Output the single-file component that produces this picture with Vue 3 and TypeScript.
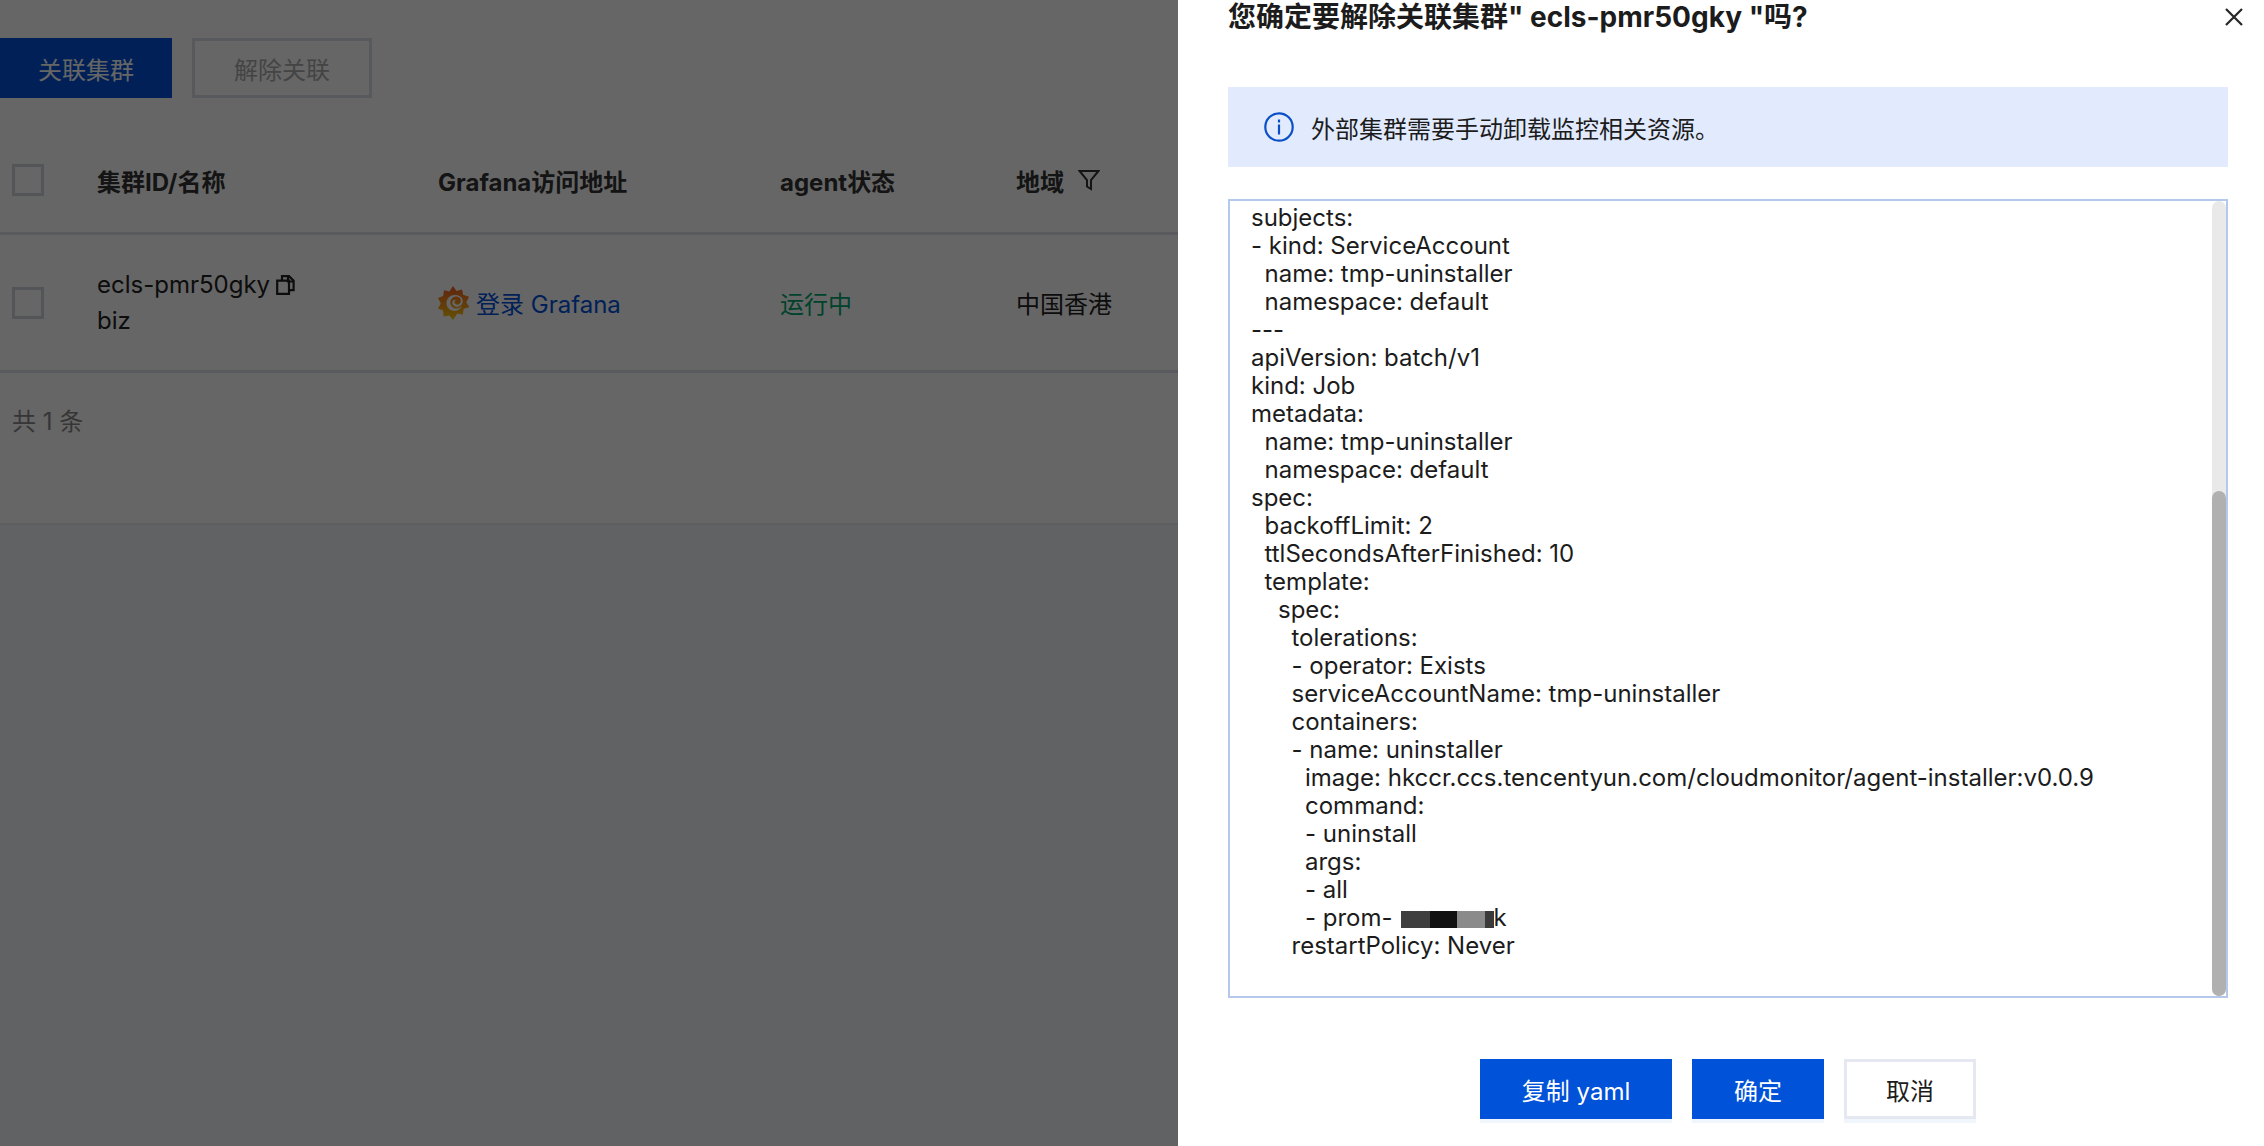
<script setup lang="ts">
interface YamlLine { text: string; redacted?: boolean; tail?: string }

const yamlLines: YamlLine[] = [
  { text: 'subjects:' },
  { text: '- kind: ServiceAccount' },
  { text: '  name: tmp-uninstaller' },
  { text: '  namespace: default' },
  { text: '---' },
  { text: 'apiVersion: batch/v1' },
  { text: 'kind: Job' },
  { text: 'metadata:' },
  { text: '  name: tmp-uninstaller' },
  { text: '  namespace: default' },
  { text: 'spec:' },
  { text: '  backoffLimit: 2' },
  { text: '  ttlSecondsAfterFinished: 10' },
  { text: '  template:' },
  { text: '    spec:' },
  { text: '      tolerations:' },
  { text: '      - operator: Exists' },
  { text: '      serviceAccountName: tmp-uninstaller' },
  { text: '      containers:' },
  { text: '      - name: uninstaller' },
  { text: '        image: hkccr.ccs.tencentyun.com/cloudmonitor/agent-installer:v0.0.9' },
  { text: '        command:' },
  { text: '        - uninstall' },
  { text: '        args:' },
  { text: '        - all' },
  { text: '        - prom-', redacted: true, tail: 'k' },
  { text: '      restartPolicy: Never' },
]
</script>

<template>
  <div class="root">
    <main class="page">
      <section class="panel">
        <div class="toolbar">
          <button class="btn primary wide">关联集群</button>
          <button class="btn disabled wide2">解除关联</button>
        </div>
        <div class="table">
          <div class="tr head">
            <div class="td"><span class="check"></span></div>
            <div class="td">集群ID/名称</div>
            <div class="td">Grafana访问地址</div>
            <div class="td">agent状态</div>
            <div class="td area">
              地域
              <svg class="funnel" viewBox="0 0 22 22" fill="none" stroke="currentColor" stroke-width="2">
                <path d="M1.5 2h19l-7.5 9v9l-4-2.5V11z" stroke-linejoin="miter" />
              </svg>
            </div>
          </div>
          <div class="tr body">
            <div class="td"><span class="check"></span></div>
            <div class="td stack">
              <div class="idline">
                ecls-pmr50gky
                <svg class="copy" viewBox="0 0 19 20" fill="none" stroke="currentColor" stroke-width="2.2">
                  <path d="M6 5V1.2h7l4.6 4.6v9.4H13" />
                  <path d="M1.2 5.6H13v13.2H1.2z" />
                  <path d="M12 1.5V6.5h5.5" />
                </svg>
              </div>
              <div>biz</div>
            </div>
            <div class="td link">
              <svg class="grafana" viewBox="0 0 32 34">
                <defs>
                  <linearGradient id="gf" x1="0" y1="0" x2="0" y2="1">
                    <stop offset="0" stop-color="#f05a28" />
                    <stop offset="1" stop-color="#fbca0a" />
                  </linearGradient>
                </defs>
                <path
                  fill="url(#gf)"
                  fill-rule="evenodd"
                  d="M15 0l3.5 5 5.6-1.6 1 5.4 6 2-2.8 5.4 3 5-5.6 1.5-.9 6-5.5-1.2L15 34l-3.6-4.6-5.8 1-.5-6L0 22.600l2.800-5.200L0 12l5.200-2 .8-5.800 5.400 1.400zM16.500 9a8 8 0 1 0 7.500 10.500c-1.500 2-3.500 3-5.500 3a6 6 0 0 1-.5-12c2.500 0 4.500 1.500 4.800 3.500.6 2.800-1.800 5-4 4.600-1.800-.3-2.600-1.800-2.300-3 .3-1 1.200-1.500 2.200-1.300-1.500-1.500-4.500-.3-4.500 2.300 0 2.500 2.300 4.500 5 4.300 3.500-.3 6-3.200 5.500-6.800C24 10.500 20.500 9 16.500 9z"
                />
              </svg>
              <span>登录 Grafana</span>
            </div>
            <div class="td running">运行中</div>
            <div class="td">中国香港</div>
          </div>
        </div>
        <div class="total">共 1 条</div>
      </section>
    </main>

    <div class="mask"></div>

    <aside class="drawer">
      <header class="drawer-head">
        <h2 class="title">您确定要解除关联集群" ecls-pmr50gky "吗?</h2>
        <svg class="close" viewBox="0 0 18 18" fill="none" stroke="currentColor" stroke-width="2.200">
          <path d="M1 1l16 16M17 1L1 17" />
        </svg>
      </header>
      <div class="alert">
        <svg class="info" viewBox="0 0 30 30" fill="none" stroke="currentColor" stroke-width="2.200">
          <circle cx="15" cy="15" r="13.700" />
          <path d="M15 12.500v10" />
          <path d="M15 7.500v3" />
        </svg>
        <span>外部集群需要手动卸载监控相关资源。</span>
      </div>
      <div class="yaml">
        <div class="yaml-text">
          <div v-for="(line, i) in yamlLines" :key="i" class="yaml-line">{{ line.text }}<template v-if="line.redacted"><span class="redact"></span>{{ line.tail }}</template></div>
        </div>
        <div class="scrollbar">
          <div class="thumb"></div>
        </div>
      </div>
      <footer class="actions">
        <button class="btn primary lift copy-btn">复制 yaml</button>
        <button class="btn primary lift act">确定</button>
        <button class="btn plain lift act">取消</button>
      </footer>
    </aside>
  </div>
</template>

<style>
html, body { margin: 0; padding: 0; background: #f3f4f7; }
</style>

<style scoped>
.root {
  position: relative;
  width: 2264px;
  height: 1146px;
  overflow: hidden;
  font-family: Inter, "Noto Sans CJK SC", sans-serif;
  font-size: 24px;
  color: #222;
}
.page { height: 100%; background: #f3f4f7; }
.panel {
  height: 525px;
  box-sizing: border-box;
  background: #fff;
  padding-top: 38px;
  border-bottom: 2px solid #e9ebef;
}
.toolbar { display: flex; gap: 20px; }
.btn {
  box-sizing: border-box;
  height: 60px;
  padding: 0;
  border: 0;
  border-radius: 0;
  font: inherit;
  display: flex;
  align-items: center;
  justify-content: center;
}
.primary { background: #0052d9; color: #fff; }
.wide { width: 172px; }
.wide2 { width: 180px; }
.disabled { background: #fff; color: #aaa; border: 3px solid #dcdfe6; }
.table { margin-top: 30px; }
.tr {
  display: grid;
  grid-template-columns: 97px 341px 342px 236px 1fr;
  align-items: center;
  border-bottom: 3px solid #dfe1e8;
  width: 1178px;
  box-sizing: border-box;
}
.head { height: 107px; font-weight: 700; color: #333; }
.body { height: 138px; }
.td { display: flex; align-items: center; }
.check {
  display: block;
  box-sizing: border-box;
  width: 32px;
  height: 32px;
  margin-left: 12px;
  border: 3px solid #d3d5dd;
  background: #fff;
}
.area { gap: 14px; }
.funnel { width: 22px; height: 22px; }
.stack { display: block; line-height: 36px; }
.idline { display: flex; align-items: center; gap: 6px; }
.copy { width: 19px; height: 20px; }
.link { gap: 6px; color: #0052d9; }
.grafana { width: 32px; height: 34px; flex: none; }
.running { color: #00a870; }
.total { margin: 31px 0 0 12px; line-height: 36px; color: #888; }
.mask {
  position: absolute;
  inset: 0;
  background: rgba(0, 0, 0, 0.6);
}
.drawer {
  position: absolute;
  top: 0;
  right: 0;
  bottom: 0;
  width: 1086px;
  box-sizing: border-box;
  background: #fff;
  padding: 0 36px 0 50px;
  color: #1c1c1c;
}
.drawer-head {
  height: 87px;
  display: flex;
  align-items: flex-start;
  justify-content: space-between;
}
.title {
  margin: 0;
  font-size: 28px;
  line-height: 34px;
  font-weight: 700;
}
.close { width: 18px; height: 18px; margin: 8px -15px 0 0; color: #262626; }
.alert {
  height: 80px;
  display: flex;
  align-items: center;
  padding-left: 36px;
  gap: 17px;
  background: #e2ebfd;
}
.info { width: 30px; height: 30px; color: #0a4fc7; }
.yaml {
  position: relative;
  margin-top: 32px;
  height: 799px;
  box-sizing: border-box;
  border: 2px solid #b3c8ea;
  overflow: hidden;
}
.yaml-text { padding: 3px 0 0 21px; }
.yaml-line {
  height: 28px;
  line-height: 28px;
  white-space: pre;
}
.redact {
  display: inline-block;
  width: 93px;
  height: 17px;
  margin-left: 8px;
  vertical-align: -2px;
  background: linear-gradient(90deg, #3f3f3f 0 31%, #111 31% 60%, #8a8a8a 60% 90%, #3a3a3a 90% 100%);
}
.scrollbar {
  position: absolute;
  top: 0;
  right: 0;
  bottom: 0;
  width: 14px;
  border-radius: 7px;
  background: #e9e9e9;
}
.thumb {
  position: absolute;
  top: 290px;
  left: 0;
  right: 0;
  bottom: 0;
  border-radius: 7px;
  background: #b0b0b0;
}
.actions {
  display: flex;
  gap: 20px;
  margin: 61px 0 0 252px;
}
.lift { box-shadow: 0 4px 0 #f0f6fb; }
.copy-btn { width: 192px; }
.act { width: 132px; }
.plain { background: #fff; border: 3px solid #e5e8f0; color: #1c1c1c; }
</style>
